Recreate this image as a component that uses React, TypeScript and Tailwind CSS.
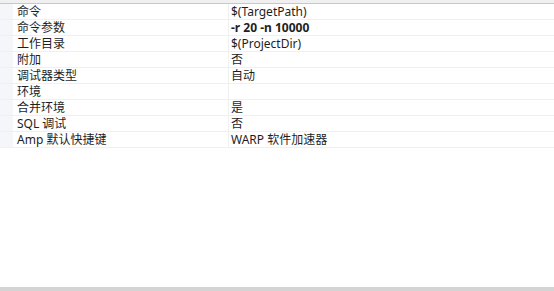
const rows: { label: string; value: string; bold?: boolean }[] = [
  { label: "命令", value: "$(TargetPath)" },
  { label: "命令参数", value: "-r 20 -n 10000", bold: true },
  { label: "工作目录", value: "$(ProjectDir)" },
  { label: "附加", value: "否" },
  { label: "调试器类型", value: "自动" },
  { label: "环境", value: "" },
  { label: "合并环境", value: "是" },
  { label: "SQL 调试", value: "否" },
  { label: "Amp 默认快捷键", value: "WARP 软件加速器" },
];

export default function App() {
  return (
    <div
      className="flex h-[291px] w-[554px] flex-col bg-white text-[12px] text-[#1e1e1e]"
      style={{ fontFamily: '"Noto Sans", "Noto Sans CJK SC", sans-serif' }}
    >
      <div className="h-[3px] bg-[#f0f0f0]" />
      <div className="h-px bg-[#c8c8c8]" />
      <div className="flex flex-1 flex-col">
        {rows.map((row) => (
          <div key={row.label} className="flex h-[16px] border-b border-[#f0f0f0]">
            <div className="w-[13px] bg-[#f5f6f9]" />
            <div className="flex w-[216px] items-center border-r border-[#f0f0f0] pl-[4px] leading-none">
              {row.label}
            </div>
            <div className={`flex flex-1 items-center pl-[2px] leading-none ${row.bold ? "font-bold" : ""}`}>
              {row.value}
            </div>
          </div>
        ))}
      </div>
      <div className="h-[4px] bg-[#d4d4d4]" />
    </div>
  );
}
